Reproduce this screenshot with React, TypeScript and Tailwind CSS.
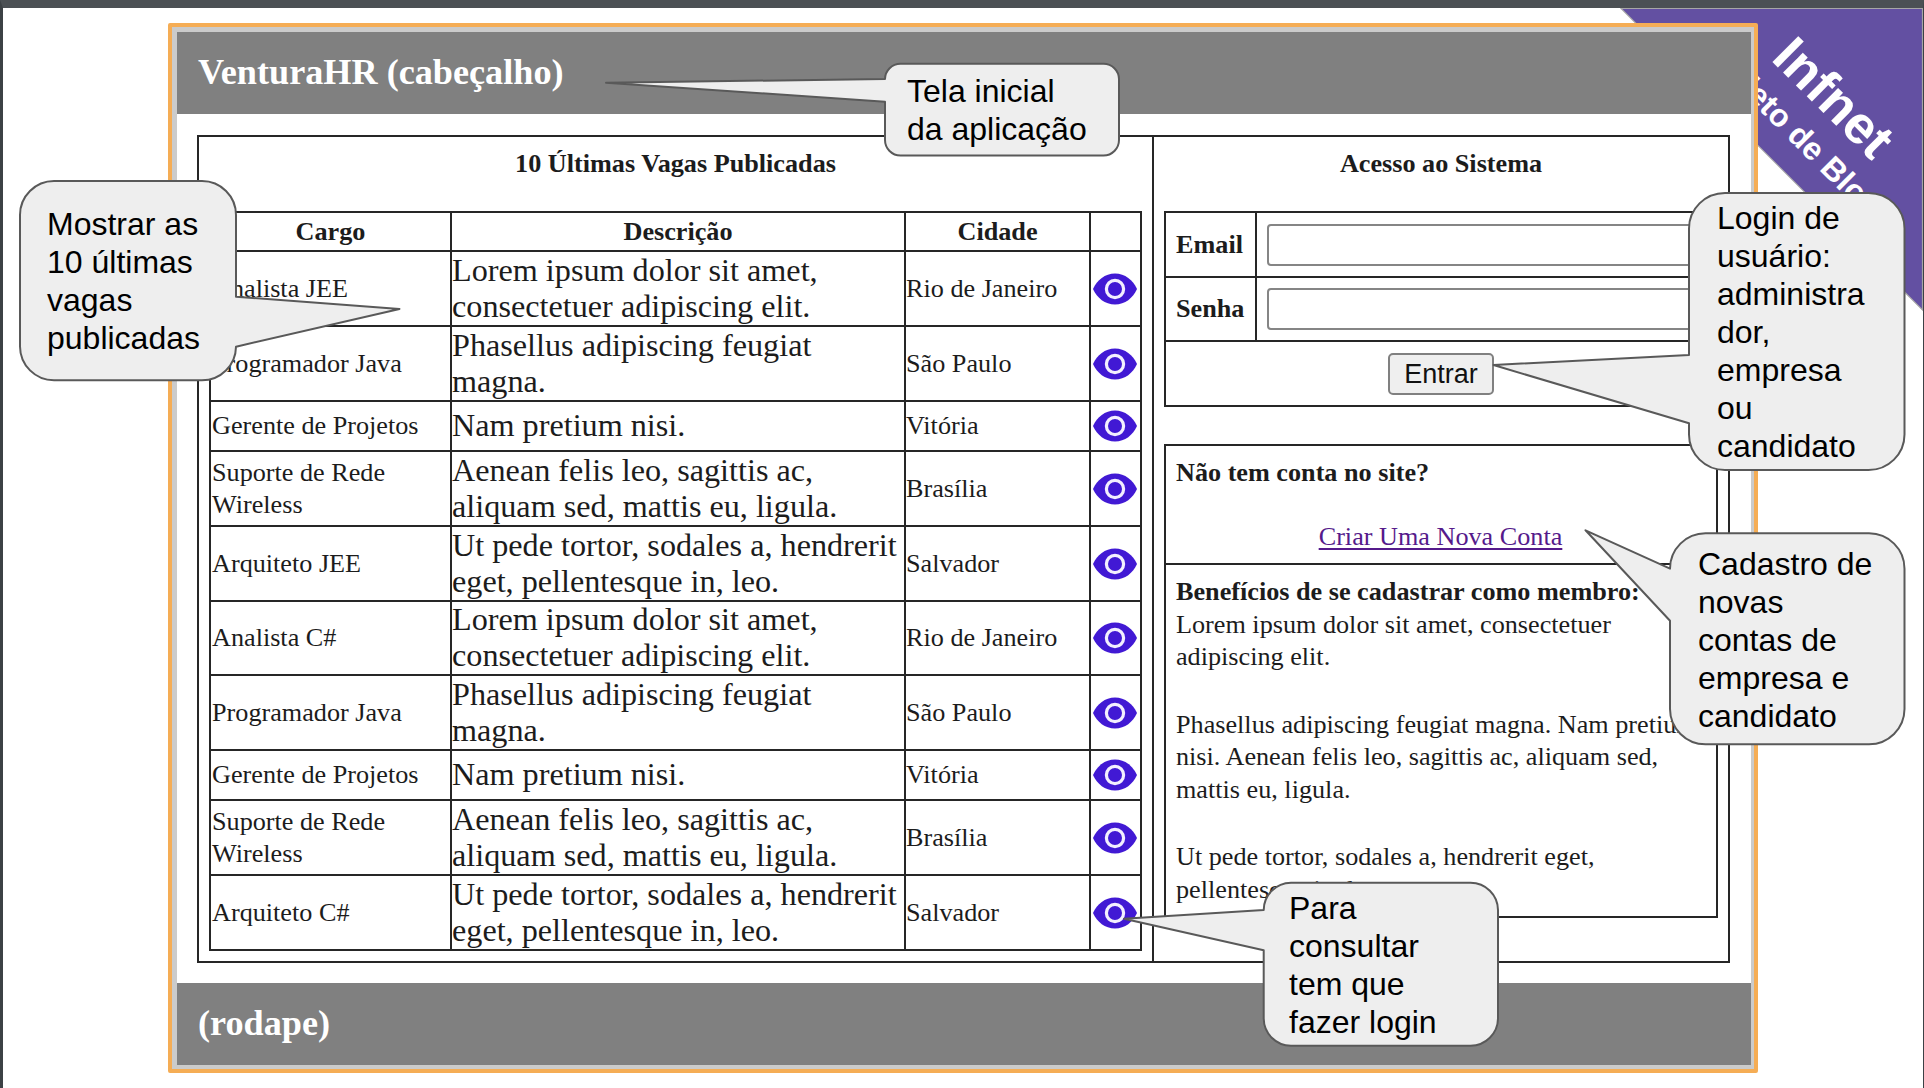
import React from "react";

type Job = { cargo: string; desc: string; cidade: string; h: string };

const D1 = "Lorem ipsum dolor sit amet, consectetuer adipiscing elit.";
const D2 = "Phasellus adipiscing feugiat magna.";
const D3 = "Nam pretium nisi.";
const D4 = "Aenean felis leo, sagittis ac, aliquam sed, mattis eu, ligula.";
const D5 = "Ut pede tortor, sodales a, hendrerit eget, pellentesque in, leo.";

const jobs: Job[] = [
  { cargo: "Analista JEE", desc: D1, cidade: "Rio de Janeiro", h: "h-[75px]" },
  { cargo: "Programador Java", desc: D2, cidade: "São Paulo", h: "h-[75px]" },
  { cargo: "Gerente de Projetos", desc: D3, cidade: "Vitória", h: "h-[50px]" },
  { cargo: "Suporte de Rede Wireless", desc: D4, cidade: "Brasília", h: "h-[75px]" },
  { cargo: "Arquiteto JEE", desc: D5, cidade: "Salvador", h: "h-[75px]" },
  { cargo: "Analista C#", desc: D1, cidade: "Rio de Janeiro", h: "h-[74px]" },
  { cargo: "Programador Java", desc: D2, cidade: "São Paulo", h: "h-[75px]" },
  { cargo: "Gerente de Projetos", desc: D3, cidade: "Vitória", h: "h-[50px]" },
  { cargo: "Suporte de Rede Wireless", desc: D4, cidade: "Brasília", h: "h-[75px]" },
  { cargo: "Arquiteto C#", desc: D5, cidade: "Salvador", h: "h-[75px]" },
];

const COLS = "grid grid-cols-[241px_454px_185px_51px]";
const LINE = "border-[#262626]";

function Eye() {
  return (
    <svg viewBox="0 0 44 32" className="h-8 w-11">
      <path d="M0 16C4 7 12 .5 22 .5S40 7 44 16C40 25 32 31.500 22 31.500S4 25 0 16Z" fill="#4119d4" />
      <circle cx="22" cy="16" r="8.600" fill="none" stroke="#f3efff" strokeWidth="3.200" />
    </svg>
  );
}

function JobsTable() {
  return (
    <div className={`w-[933px] border-l-2 border-t-2 ${LINE}`}>
      <div className={`${COLS} h-[39px] text-center font-bold leading-[33px]`}>
        {["Cargo", "Descrição", "Cidade", ""].map((t, i) => (
          <div key={i} className={`border-b-2 border-r-2 pt-[2px] ${LINE}`}>{t}</div>
        ))}
      </div>
      {jobs.map((j, i) => (
        <div key={i} className={`${COLS} ${j.h}`}>
          <div className={`flex items-center border-b-2 border-r-2 ${LINE}`}>
            <span className="w-[215px] pl-px pt-px">{j.cargo}</span>
          </div>
          <div className={`flex items-center border-b-2 border-r-2 text-[32.200px] leading-[36px] ${LINE}`}>
            <span className="-mt-[2px] w-[450px]">{j.desc}</span>
          </div>
          <div className={`flex items-center border-b-2 border-r-2 pt-px ${LINE}`}>{j.cidade}</div>
          <div className={`flex items-center border-b-2 border-r-2 pl-[2px] ${LINE}`}>
            <Eye />
          </div>
        </div>
      ))}
    </div>
  );
}

function LoginRow({ label, h }: { label: string; h: string }) {
  return (
    <div className={`flex border-b-2 ${h} ${LINE}`}>
      <div className={`flex w-[91px] items-center border-r-2 pl-[10px] pt-px font-bold ${LINE}`}>{label}</div>
      <div className="flex flex-1 items-center px-[10px]">
        <input aria-label={label} className="h-[42px] w-full rounded-[4px] border-2 border-[#858585] bg-white" />
      </div>
    </div>
  );
}

function AccessPanel() {
  return (
    <div className="w-[554px]">
      <div className={`h-[196px] border-2 ${LINE}`}>
        <LoginRow label="Email" h="h-[65px]" />
        <LoginRow label="Senha" h="h-[64px]" />
        <div className="flex justify-center pt-[11px]">
          <button className="h-[42px] w-[106px] rounded-[5px] border-2 border-[#808080] bg-[#efefef] font-['Liberation_Sans',sans-serif] text-[27px] leading-[38px] text-[#111]">
            Entrar
          </button>
        </div>
      </div>
      <div className={`mt-[37px] h-[474px] border-2 ${LINE}`}>
        <div className={`h-[119px] border-b-2 pl-[10px] pt-[11px] ${LINE}`}>
          <p className="font-bold">Não tem conta no site?</p>
          <p className="pr-[11px] pt-[31px] text-center">
            <a href="#" className="text-[#551a8b] underline decoration-2 underline-offset-[3px]">Criar Uma Nova Conta</a>
          </p>
        </div>
        <div className="pl-[10px] pt-[11px]">
          <p className="font-bold">Benefícios de se cadastrar como membro:</p>
          <p className="w-[480px]">Lorem ipsum dolor sit amet, consectetuer adipiscing elit.</p>
          <p className="mt-[35px] w-[530px]">
            Phasellus adipiscing feugiat magna. Nam pretium nisi. Aenean felis leo, sagittis ac, aliquam sed, mattis eu, ligula.
          </p>
          <p className="mt-[35px] w-[480px]">Ut pede tortor, sodales a, hendrerit eget, pellentesque in, leo.</p>
        </div>
      </div>
    </div>
  );
}

type Note = { path: string; pos: string; lines: string[] };

/* Speech balloons: outline in page coordinates, text block placed inside. */
const notes: Note[] = [
  {
    path: "M20 215A34 34 0 0 1 54 181H202A34 34 0 0 1 236 215V296.700L399.500 309L236 346.700A34 34 0 0 1 202 380.300H54A34 34 0 0 1 20 346.500Z",
    pos: "left-[47px] top-[205px]",
    lines: ["Mostrar as", "10 últimas", "vagas", "publicadas"],
  },
  {
    path: "M885 79A15.500 15.500 0 0 1 900.500 63.700H1103.500A15.500 15.500 0 0 1 1119 79V140A15.500 15.500 0 0 1 1103.500 155.500H900.500A15.500 15.500 0 0 1 885 140V101.700L606 82.700Z",
    pos: "left-[907px] top-[72px]",
    lines: ["Tela inicial", "da aplicação"],
  },
  {
    path: "M1689 228.500A36 35.500 0 0 1 1725 193H1868.500A36 35.500 0 0 1 1904.500 228.500V434.500A36 35.500 0 0 1 1868.500 470H1725A36 35.500 0 0 1 1689 434.500V423.300L1493.500 365L1689 355Z",
    pos: "left-[1717px] top-[199px]",
    lines: ["Login de", "usuário:", "administra", "dor,", "empresa", "ou", "candidato"],
  },
  {
    path: "M1670 568.700A35.500 35.500 0 0 1 1705.500 533.300H1869A35.500 35.500 0 0 1 1904.500 568.700V709A35.500 35.500 0 0 1 1869 744.300H1705.500A35.500 35.500 0 0 1 1670 709V620.700L1585.500 530.300Z",
    pos: "left-[1698px] top-[545px]",
    lines: ["Cadastro de", "novas", "contas de", "empresa e", "candidato"],
  },
  {
    path: "M1263.700 910A27.500 27.500 0 0 1 1291 882.700H1470.500A27.500 27.500 0 0 1 1498 910V1018.500A27.500 27.500 0 0 1 1470.500 1045.700H1291A27.500 27.500 0 0 1 1263.700 1018.500V950.300L1124 918.700Z",
    pos: "left-[1289px] top-[889px]",
    lines: ["Para", "consultar", "tem que", "fazer login"],
  },
];

function Ribbon() {
  return (
    <svg viewBox="0 0 303 304" className="absolute right-0 top-0 h-[304px] w-[303px]">
      <path d="M1 .5H302.500V302Z" fill="#6350a2" stroke="#a6a6a6" strokeWidth="1.200" />
      <g fill="#fff" fontFamily="Liberation Sans, Arial, sans-serif" fontWeight="700">
        <text transform="translate(150 51.500) rotate(45)" fontSize="53">Infnet</text>
        <text transform="translate(81.500 44.500) rotate(45)" fontSize="32">Projeto de Bloco</text>
      </g>
    </svg>
  );
}

export default function App() {
  return (
    <div className="relative h-[1088px] w-[1924px] overflow-hidden border-l-[3px] border-r border-t-8 border-l-[#3c4145] border-r-[#3c4145] border-t-[#4b5054] bg-white">
      <Ribbon />
      <div className="relative ml-[165px] mt-[15px] flex h-[1050px] w-[1590px] flex-col rounded-[2px] border-4 border-[#f5ad55] font-['Liberation_Serif',serif] text-[26.200px] leading-[32.500px] text-[#1c1c1c]">
        <div className="flex flex-1 flex-col border-b-4 border-l-[5px] border-r-[3px] border-t-[5px] border-[#cbcbcb] bg-white">
          <header className="h-[82px] bg-[#808080] pl-[21px] pt-[19px] text-[36.200px] font-bold leading-[42px] text-white">
            VenturaHR (cabeçalho)
          </header>
          <main className={`mb-[20px] ml-[20px] mt-[21px] flex h-[828px] w-[1533px] border-2 ${LINE}`}>
            <section className={`w-[955px] border-r-2 pl-[10px] ${LINE}`}>
              <h2 className="h-[74px] pr-[10px] pt-[11px] text-center font-bold">10 Últimas Vagas Publicadas</h2>
              <JobsTable />
            </section>
            <section className="flex-1 pl-[10px]">
              <h2 className="h-[74px] pr-[10px] pt-[11px] text-center font-bold">Acesso ao Sistema</h2>
              <AccessPanel />
            </section>
          </main>
          <footer className="flex-1 bg-[#808080] pl-[21px] pt-[19px] text-[36.200px] font-bold leading-[42px] text-white">(rodape)</footer>
        </div>
      </div>
      <div className="pointer-events-none absolute -left-[3px] -top-2 h-[1088px] w-[1924px] font-['Liberation_Sans',sans-serif] text-[32px] leading-[38px] text-black">
        <svg viewBox="0 0 1924 1088" className="absolute inset-0 h-full w-full">
          {notes.map((n) => (
            <path key={n.pos} d={n.path} fill="#eeeeee" stroke="#595959" strokeWidth="2" strokeLinejoin="round" />
          ))}
        </svg>
        {notes.map((n) => (
          <div key={n.pos} className={`absolute whitespace-nowrap ${n.pos}`}>
            {n.lines.map((l) => (
              <div key={l}>{l}</div>
            ))}
          </div>
        ))}
      </div>
    </div>
  );
}
